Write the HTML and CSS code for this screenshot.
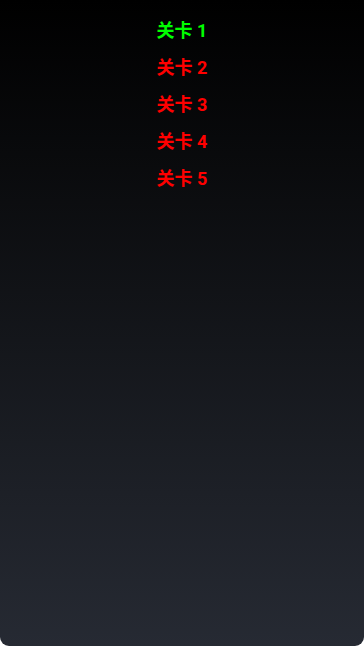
FILE: index.html
```html
<!DOCTYPE html>
<html lang="zh">
<head>
<meta charset="utf-8">
<title>关卡</title>
<link rel="stylesheet" href="styles.css">
</head>
<body>
<div class="screen">
  <ul class="levels">
    <li class="level done">关卡 1</li>
    <li class="level locked">关卡 2</li>
    <li class="level locked">关卡 3</li>
    <li class="level locked">关卡 4</li>
    <li class="level locked">关卡 5</li>
  </ul>
</div>
</body>
</html>
```

FILE: styles.css
```css
html, body {
  margin: 0;
  padding: 0;
  background: #ffffff;
}
.screen {
  height: 646px;
  background: linear-gradient(to bottom, #000000, #262a33);
  border-radius: 0 0 9px 9px;
  overflow: hidden;
}
.levels {
  list-style: none;
  margin: 0;
  padding: 12px 0 0;
  display: flex;
  flex-direction: column;
  align-items: center;
}
.level {
  font-family: Roboto, "Noto Sans CJK SC", sans-serif;
  font-weight: bold;
  font-size: 18px;
  line-height: 37px;
  text-align: center;
}
.done { color: #00ff00; }
.locked { color: #ff0000; }
```
